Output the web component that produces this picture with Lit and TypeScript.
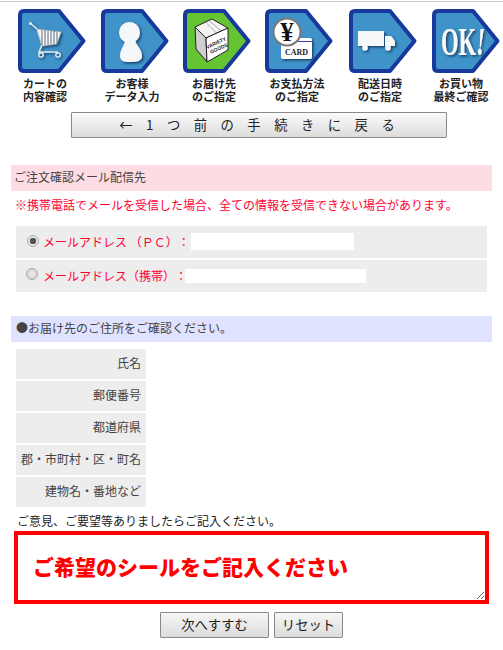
import { LitElement, html, css, svg } from "lit";
import { customElement } from "lit/decorators.js";

const frame = (fill = "#3f93c8") => svg`<path d="M6 2H41L65.500 32L41 62H6Q2 62 2 58V6Q2 2 6 2Z" fill="${fill}" stroke="#17399b" stroke-width="4" stroke-linejoin="round"/>`;

const cart = svg`
  <g filter="url(#sh)">
    <circle cx="12.500" cy="14.500" r="1.500" fill="#eef2f5"/>
    <path d="M12 14L19 20L24 36L21 43H40" fill="none" stroke="#dfe6ea" stroke-width="1.500"/>
    <path d="M19 20L43 23L39 35L24 37Z" fill="#f4f6f8" stroke="#9aa6ad" stroke-width=".6"/>
    <path d="M24 21V36M27 21V36M30 22V36M33 22V35M36 22V35M39 23V35" stroke="#5f6e78" stroke-width="1"/>
    <circle cx="23" cy="46" r="2.200" fill="none" stroke="#eef2f5" stroke-width="1.200"/><circle cx="40" cy="46" r="2.200" fill="none" stroke="#eef2f5" stroke-width="1.200"/>
  </g>`;
const person = svg`
  <g filter="url(#sh)" fill="#f6f7f9">
    <circle cx="28.500" cy="23.500" r="10.500"/>
    <path d="M24 31C24 36 19 40 19 47C19 52 23 53 29 53C36 53 41 52 41 47C41 40 35 36 34 31Z"/>
  </g>`;
const box = svg`
  <path d="M12 18L29 10L45 19L23 29Z" fill="#f3f3f3" stroke="#222" stroke-width="1"/>
  <path d="M23.500 14L34 24.500M27 12.500L38.500 22" stroke="#999" stroke-width=".8"/>
  <path d="M12 18L23 29L24 53L13 40Z" fill="#cfcfcf" stroke="#222" stroke-width="1"/>
  <path d="M23 29L45 19V41L24 53Z" fill="#fff" stroke="#222" stroke-width="1"/>
  <g class="boxt" transform="translate(34 35.500) rotate(-25)"><text text-anchor="middle">VARIETY</text><text text-anchor="middle" y="6">GOODS</text></g>`;
const card = svg`
  <rect x="16" y="29" width="31" height="21" rx="2" fill="#fff" filter="url(#sh)"/>
  <path d="M22 32.500H47" stroke="#3a3ad0" stroke-width="1"/>
  <text class="cardt" x="31.500" y="46" text-anchor="middle">CARD</text>
  <circle cx="22" cy="23" r="13.500" fill="#fff" stroke="#777" stroke-width="2"/>
  <text class="yen" x="22" y="32" text-anchor="middle">¥</text>`;
const truck = svg`
  <g filter="url(#sh)">
    <rect x="9" y="22" width="26" height="15" fill="#f6f7f9"/>
    <path d="M36 27H42L46 32V37H36Z" fill="#f6f7f9"/>
    <circle cx="16" cy="39" r="2.800" fill="#f6f7f9"/><circle cx="39" cy="39" r="2.800" fill="#f6f7f9"/>
  </g>`;
const ok = svg`
  <g filter="url(#sh)"><text class="okt" x="9" y="46" textLength="44" lengthAdjust="spacingAndGlyphs">OK<tspan font-style="italic">!</tspan></text></g>`;

const steps = [
  { lines: ["カートの", "内容確認"], art: cart, c: 27, w: 83, fill: "#3f93c8" },
  { lines: ["お客様", "データ入力"], art: person, c: 31, w: 82, fill: "#3f93c8" },
  { lines: ["お届け先", "のご指定"], art: box, c: 31, w: 82, fill: "#66c433" },
  { lines: ["お支払方法", "のご指定"], art: card, c: 32, w: 84, fill: "#3f93c8" },
  { lines: ["配送日時", "のご指定"], art: truck, c: 31, w: 83, fill: "#3f93c8" },
  { lines: ["お買い物", "最終ご確認"], art: ok, c: 29, w: 70, fill: "#3f93c8" },
];
const addressLabels = ["氏名", "郵便番号", "都道府県", "郡・市町村・区・町名", "建物名・番地など"];

@customElement("app-root")
export class AppRoot extends LitElement {
  static styles = css`
    :host { display: block; width: 503px; height: 650px; overflow: hidden; background: #fff; color: #333;
      font-family: "Noto Sans CJK JP", "Liberation Sans", sans-serif; font-size: 12px; text-spacing-trim: space-all; }
    .rule { height: 1px; margin-top: 1px; background: #c8c8c8; }
    .steps { display: flex; margin: 7px 0 0 18px; }
    .step { flex: none; }
    .icon { display: block; width: 70px; height: 66px; }
    .lab { margin-top: 2px; padding-bottom: 1px; font-size: 11px; line-height: 13px; font-weight: 700; color: #222; text-align: center; white-space: nowrap; }
    .boxt { font: 700 5px "Liberation Sans", sans-serif; fill: #222; }
    .cardt { font: 700 8px "Liberation Serif", serif; fill: #222; }
    .yen { font: 700 27px "Liberation Serif", serif; fill: #111; }
    .okt { font: 700 39px "Liberation Serif", serif; fill: #f8f8f8; }
    .back { display: block; box-sizing: border-box; width: 376px; height: 26px; margin: 8px 0 0 71px; padding: 0 0 2px;
      border: 1px solid #8a8a8a; border-radius: 1px; background: linear-gradient(#fbfbfb, #dcdcdc);
      font: 13.330px "Noto Sans CJK JP", sans-serif; word-spacing: 2.500px; letter-spacing: 4px; color: #222; }
    .bar { margin: 0 11px; height: 26px; padding-left: 3px; line-height: 24px; color: #444; }
    .pink { margin-top: 27px; background: #fddde3; }
    .warn { height: 35px; padding: 5px 0 0 15px; box-sizing: border-box; line-height: 17px; color: #ff0033; white-space: nowrap; }
    .rows { display: grid; gap: 2px; margin: 0 16px; }
    .row { display: flex; align-items: center; height: 32px; background: #ededed; color: #ff0033; white-space: pre; }
    .r1 { padding-left: 11px; }
    .r2 { padding-left: 10px; }
    .radio { appearance: none; flex: none; box-sizing: border-box; width: 12px; height: 12px; margin: -3px 4px 0 0; border: 1px solid #aaa;
      border-radius: 50%; background: radial-gradient(#eee, #ccc); }
    .r2 .radio { margin-right: 5px; margin-top: -5px; }
    .radio:checked { background: radial-gradient(#555 0 3px, #e4e4e4 3.500px); }
    .cap { display: block; margin-top: -1px; }
    .txt { box-sizing: border-box; flex: none; border: 0; padding: 0; background: #fff; }
    .r1 .txt { width: 163px; height: 17px; margin-left: 1px; margin-top: -1px; }
    .r2 .txt { width: 181px; height: 14px; margin-left: -2px; }
    .blue { margin-top: 24px; padding-left: 5px; background: #dfe3ff; }
    .addr { display: grid; gap: 2px; width: 130px; margin: 7px 0 0 16px; }
    .addr div { height: 30px; padding-right: 5px; box-sizing: border-box; line-height: 28px; text-align: right; background: #ededed; color: #444; white-space: nowrap; }
    .note { margin: 5px 0 0 17px; line-height: 17px; color: #222; }
    .area { display: block; box-sizing: border-box; width: 475px; height: 73px; margin: 2px 0 0 14px; padding: 17px 15px 0; border: 4px solid #f00;
      outline: none; background: #fff; font: 900 21px/28px "Noto Sans CJK JP", sans-serif; resize: both; }
    .area::placeholder { color: #f00; opacity: 1; }
    .btns { display: flex; gap: 5px; margin: 8px 0 0 160px; }
    .btn { box-sizing: border-box; height: 26px; padding: 0 0 1px; border: 1px solid #8a8a8a; border-radius: 1px; background: linear-gradient(#f6f6f6, #dcdcdc);
      font: 13.330px "Noto Sans CJK JP", sans-serif; color: #222; }
    .go { width: 109px; }
    .reset { width: 69px; }
  `;

  render() {
    return html`
      <div class="rule"></div>
      <div class="steps">
        ${steps.map((s) => html`
          <div class="step" style="width:${s.w}px">
            <svg class="icon" viewBox="0 0 70 66">
              <defs><filter id="sh" x="-30%" y="-30%" width="170%" height="170%"><feDropShadow dx="1.500" dy="1.500" stdDeviation="1" flood-color="#0b2a55" flood-opacity=".8"/></filter></defs>
              ${frame(s.fill)}${s.art}
            </svg>
            <div class="lab" style="width:${s.c * 2}px">${s.lines[0]}<br />${s.lines[1]}</div>
          </div>`)}
      </div>
      <button class="back">← 1 つ 前 の 手 続 き に 戻 る</button>

      <div class="bar pink">ご注文確認メール配信先</div>
      <div class="warn">※携帯電話でメールを受信した場合、全ての情報を受信できない場合があります。</div>
      <div class="rows">
        <label class="row r1"><input class="radio" type="radio" name="m" checked /><span class="cap">メールアドレス （ＰＣ）：</span><input class="txt" type="text" /></label>
        <label class="row r2"><input class="radio" type="radio" name="m" /><span class="cap">メールアドレス（携帯）：</span><input class="txt" type="text" /></label>
      </div>

      <div class="bar blue">●お届け先のご住所をご確認ください。</div>
      <div class="addr">${addressLabels.map((l) => html`<div>${l}</div>`)}</div>
      <div class="note">ご意見、ご要望等ありましたらご記入ください。</div>
      <textarea class="area" placeholder="ご希望のシールをご記入ください"></textarea>
      <div class="btns"><button class="btn go">次へすすむ</button><button class="btn reset">リセット</button></div>
    `;
  }
}
